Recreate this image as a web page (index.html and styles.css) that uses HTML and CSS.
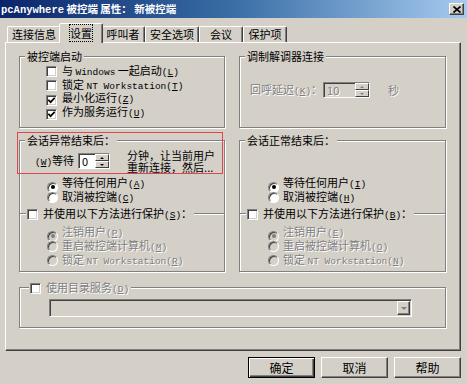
FILE: index.html
```html
<!DOCTYPE html>
<html lang="zh-CN">
<head>
  <meta charset="UTF-8" />
  <title>pcAnywhere 被控端 属性</title>
  <link rel="stylesheet" href="styles.css">
</head>
<body>
  <div class="window">
    <div class="titlebar">
      <span class="title"><span class="en">pcAnywhere</span> 被控端 属性： 新被控端</span>
      <span class="close">
        <svg width="8" height="7" viewBox="0 0 8 7"><path d="M0.5 0.5L7.5 6.5M7.5 0.5L0.5 6.5" stroke="#000" stroke-width="1.7"/></svg>
      </span>
    </div>

    <div class="tabs">
      <div class="tab">连接信息</div>
      <div class="tab active"><span class="focus">设置</span></div>
      <div class="tab">呼叫者</div>
      <div class="tab">安全选项</div>
      <div class="tab">会议</div>
      <div class="tab">保护项</div>
    </div>

    <div class="panel">
      <div class="groups">
        <fieldset class="group">
          <legend>被控端启动</legend>
          <div class="startup">
            <div class="row"><span class="chk"></span>与 <span class="en">Windows</span> 一起启动<span class="en">(<u>L</u>)</span></div>
            <div class="row"><span class="chk"></span>锁定 <span class="en">NT Workstation(<u>T</u>)</span></div>
            <div class="row"><span class="chk"><svg width="7" height="7" viewBox="0 0 7 7"><path d="M0.3 2.8L2.6 5.2L6.7 0.8" fill="none" stroke="#000" stroke-width="1.7"/></svg></span>最小化运行<span class="en">(<u>Z</u>)</span></div>
            <div class="row"><span class="chk"><svg width="7" height="7" viewBox="0 0 7 7"><path d="M0.3 2.8L2.6 5.2L6.7 0.8" fill="none" stroke="#000" stroke-width="1.7"/></svg></span>作为服务运行<span class="en">(<u>U</u>)</span></div>
          </div>
        </fieldset>

        <fieldset class="group">
          <legend>调制解调器连接</legend>
          <div class="modem-row off">
            <span>回呼延迟<span class="en">(<u>K</u>)</span>：</span>
            <span class="spin dim"><span class="val">10</span><span class="arrows"><i class="up"></i><i class="down"></i></span></span>
            <span class="unit">秒</span>
          </div>
        </fieldset>

        <fieldset class="group">
          <legend>会话异常结束后：</legend>
          <div class="wait">
            <span><span class="en">(<u>W</u>)</span>等待</span>
            <span class="spin"><span class="val">0</span><span class="arrows"><i class="up"></i><i class="down"></i></span></span>
            <span class="note">分钟，让当前用户<br>重新连接，然后...</span>
          </div>
          <div class="radios">
            <div class="row"><span class="radio on"></span>等待任何用户<span class="en">(<u>A</u>)</span></div>
            <div class="row"><span class="radio"></span>取消被控端<span class="en">(<u>C</u>)</span></div>
          </div>
          <fieldset class="sub">
            <legend><span class="chk"></span>并使用以下方法进行保护<span class="en">(<u>S</u>)</span>：</legend>
            <div class="opts off">
              <div class="row"><span class="radio on"></span>注销用户<span class="en">(<u>P</u>)</span></div>
              <div class="row"><span class="radio"></span>重启被控端计算机<span class="en">(<u>M</u>)</span></div>
              <div class="row"><span class="radio"></span>锁定 <span class="en">NT Workstation(<u>R</u>)</span></div>
            </div>
          </fieldset>
        </fieldset>

        <fieldset class="group">
          <legend>会话正常结束后：</legend>
          <div class="radios late">
            <div class="row"><span class="radio on"></span>等待任何用户<span class="en">(<u>I</u>)</span></div>
            <div class="row"><span class="radio"></span>取消被控端<span class="en">(<u>H</u>)</span></div>
          </div>
          <fieldset class="sub">
            <legend><span class="chk"></span>并使用以下方法进行保护<span class="en">(<u>B</u>)</span>：</legend>
            <div class="opts late off">
              <div class="row"><span class="radio on"></span>注销用户<span class="en">(<u>E</u>)</span></div>
              <div class="row"><span class="radio"></span>重启被控端计算机<span class="en">(<u>O</u>)</span></div>
              <div class="row"><span class="radio"></span>锁定 <span class="en">NT Workstation(<u>N</u>)</span></div>
            </div>
          </fieldset>
        </fieldset>
      </div>

      <fieldset class="group dir">
        <legend><span class="chk"></span><span class="off">使用目录服务<span class="en">(<u>D</u>)</span></span></legend>
        <div class="combo"><span class="field"></span><span class="drop"><i></i></span></div>
      </fieldset>

      <div class="alert"></div>
    </div>

    <div class="buttons">
      <button class="default">确定</button>
      <button>取消</button>
      <button>帮助</button>
    </div>
  </div>
</body>
</html>
```

FILE: styles.css
```css
body {
  margin: 0;
  background: #d4d0c8;
  font-family: "Noto Sans CJK SC", sans-serif;
  font-size: 11px;
  line-height: 12px;
  color: #000;
}

.en {
  font-family: "Liberation Mono", "Noto Sans CJK SC", monospace;
  font-size: 9.5px;
}

.window {
  width: 467px;
  height: 384px;
  overflow: hidden;
}

/* title bar */
.titlebar {
  height: 18px;
  display: flex;
  align-items: center;
  justify-content: space-between;
  padding: 0 3px 0 1px;
  background: linear-gradient(to right, #0a246a, #3a6ea5 50%, #a6caf0);
  color: #fff;
  font-weight: bold;
  font-size: 10.5px;
}

.title .en {
  font-size: 10.5px;
  font-weight: bold;
}

.close {
  box-sizing: border-box;
  width: 15px;
  height: 12px;
  display: flex;
  align-items: center;
  justify-content: center;
  background: #d4d0c8;
  border: 1px solid;
  border-color: #fff #404040 #404040 #fff;
  box-shadow: inset -1px -1px 0 #808080;
}

/* tabs */
.tabs {
  display: flex;
  align-items: flex-end;
  height: 24px;
  padding-left: 7px;
}

.tab {
  box-sizing: border-box;
  height: 16px;
  min-width: 44px;
  padding: 0 4px;
  border: 1px solid;
  border-bottom: none;
  border-color: #fff #404040 transparent #fff;
  border-radius: 2px 2px 0 0;
  box-shadow: inset -1px 0 0 #808080;
  text-align: center;
  line-height: 14px;
}

.tab.active {
  position: relative;
  z-index: 1;
  height: 20px;
  margin: 0 -2px -1px;
  padding: 3px 6px 0;
  background: #d4d0c8;
  line-height: 12px;
}

.focus {
  outline: 1px dotted #000;
}

/* tab page */
.panel {
  position: relative;
  box-sizing: border-box;
  width: 456px;
  height: 309px;
  margin-left: 5px;
  padding: 7px 0 0 13px;
  border: 1px solid;
  border-color: #fff #404040 #404040 #fff;
  box-shadow: inset -1px -1px 0 #808080;
}

.groups {
  display: grid;
  grid-template-columns: 206px 207px;
  grid-template-rows: 78px 138px;
  column-gap: 14px;
  row-gap: 6px;
}

.group {
  box-sizing: border-box;
  margin: 0;
  padding: 0;
  min-width: 0;
  border: 1px solid #808080;
  box-shadow: inset 1px 1px 0 #fff, 1px 1px 0 #fff;
}

legend {
  margin-left: 5px;
  padding: 0 2px;
  height: 12px;
  line-height: 12px;
  background: #d4d0c8;
  white-space: nowrap;
}

.row {
  height: 14px;
  line-height: 14px;
  white-space: nowrap;
}

.off {
  color: #808080;
  text-shadow: 1px 1px 0 #fff;
}

/* check boxes and radio buttons */
.chk {
  box-sizing: border-box;
  display: inline-flex;
  align-items: center;
  justify-content: center;
  width: 11px;
  height: 11px;
  margin-right: 5px;
  vertical-align: -2px;
  background: #fff;
  border: 1px solid;
  border-color: #808080 #fff #fff #808080;
  box-shadow: inset 1px 1px 0 #404040, inset -1px -1px 0 #d4d0c8;
}

.radio {
  box-sizing: border-box;
  display: inline-flex;
  align-items: center;
  justify-content: center;
  width: 11px;
  height: 11px;
  margin-right: 4px;
  vertical-align: -2px;
  border-radius: 50%;
  background: #fff;
  border: 1px solid;
  border-color: #808080 #fff #fff #808080;
  box-shadow: inset 1px 1px 0 #404040;
}

.radio.on::after {
  content: "";
  width: 4px;
  height: 4px;
  border-radius: 50%;
  background: #000;
}

.off .radio {
  background: #d4d0c8;
}

.off .radio.on::after {
  background: #808080;
}

/* spin boxes */
.spin {
  box-sizing: border-box;
  display: flex;
  height: 16px;
  background: #fff;
  border: 1px solid;
  border-color: #808080 #fff #fff #808080;
  box-shadow: inset 1px 1px 0 #404040;
}

.spin.dim {
  background: #d4d0c8;
}

.val {
  flex: 1;
  padding: 1px 0 0 3px;
  line-height: 12px;
}

.arrows {
  display: flex;
  flex-direction: column;
  width: 14px;
}

.arrows i {
  flex: 1;
  display: flex;
  align-items: center;
  justify-content: center;
  box-sizing: border-box;
  background: #d4d0c8;
  border: 1px solid;
  border-color: #fff #404040 #404040 #fff;
}

.arrows i::after {
  content: "";
  border-left: 2px solid transparent;
  border-right: 2px solid transparent;
}

.arrows .up::after {
  border-bottom: 2px solid #000;
}

.arrows .down::after {
  border-top: 2px solid #000;
}

.dim .arrows i::after {
  border-top-color: #808080;
  border-bottom-color: #808080;
}

/* group contents */
.startup {
  padding: 2px 0 0 26px;
}

.startup .row {
  height: 13.5px;
  line-height: 13.5px;
}

.modem-row {
  display: flex;
  align-items: center;
  height: 16px;
  margin-top: 20px;
  padding-left: 10px;
}

.modem-row .spin {
  width: 47px;
  margin-left: 1px;
}

.unit {
  margin-left: 18px;
}

.wait {
  display: flex;
  align-items: center;
  height: 24px;
  margin-top: 3px;
  padding-left: 15px;
}

.wait .spin {
  width: 32px;
  margin-left: 4px;
}

.note {
  margin-left: 17px;
  line-height: 12px;
}

.radios {
  margin-top: 2px;
  padding-left: 27px;
}

.radios.late {
  margin-top: 29px;
  padding-left: 28px;
}

.sub {
  margin: 4px 0 0;
  padding: 0;
  min-width: 0;
  border: none;
  border-top: 1px solid #808080;
  box-shadow: inset 0 1px 0 #fff;
}

.sub legend {
  margin-left: 6px;
  padding: 0 2px 0 1px;
}

.opts {
  padding: 5px 0 0 27px;
}

.opts.late {
  padding-left: 28px;
}

.dir {
  width: 427px;
  height: 47px;
  margin-top: 9px;
}

.dir legend {
  margin-left: 9px;
  padding: 0 2px 0 1px;
}

.combo {
  box-sizing: border-box;
  display: flex;
  width: 363px;
  height: 18px;
  margin: 6px 0 0 29px;
  padding: 1px;
  border: 1px solid;
  border-color: #808080 #fff #fff #808080;
  box-shadow: inset 1px 1px 0 #404040;
}

.field {
  flex: 1;
}

.drop {
  box-sizing: border-box;
  display: flex;
  align-items: center;
  justify-content: center;
  width: 13px;
  border: 1px solid;
  border-color: #fff #404040 #404040 #fff;
  box-shadow: inset -1px -1px 0 #808080;
}

.drop i {
  border-left: 3px solid transparent;
  border-right: 3px solid transparent;
  border-top: 3px solid #808080;
}

/* red highlight around the abnormal-end settings */
.alert {
  position: absolute;
  left: 11px;
  top: 89px;
  box-sizing: border-box;
  width: 206px;
  height: 42px;
  border: 1px solid #e04652;
}

/* dialog buttons */
.buttons {
  display: flex;
  justify-content: flex-end;
  gap: 6px;
  padding: 6px 6px 0 0;
}

button {
  box-sizing: border-box;
  width: 67px;
  height: 21px;
  padding: 0;
  font-family: "Noto Sans CJK SC", sans-serif;
  font-size: 12px;
  color: #000;
  background: #d4d0c8;
  border: 1px solid;
  border-color: #fff #404040 #404040 #fff;
  box-shadow: inset -1px -1px 0 #808080;
}

button.default {
  border-color: #000;
  box-shadow: inset 1px 1px 0 #fff, inset -1px -1px 0 #404040, inset -2px -2px 0 #808080;
}
```
